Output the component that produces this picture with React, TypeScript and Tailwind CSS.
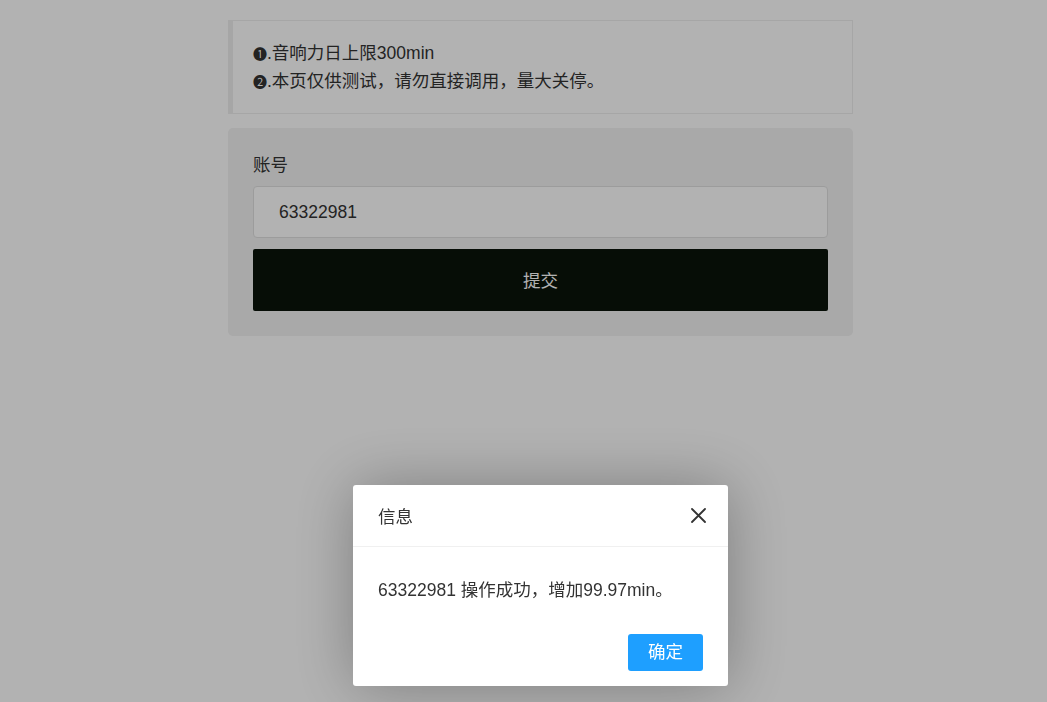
export default function App() {
  return (
    <div
      className="relative min-h-screen bg-white text-[17.5px] text-[#333]"
      style={{ fontFamily: '"Liberation Sans", "Noto Sans CJK SC", "DejaVu Sans", sans-serif' }}
    >
      <div className="ml-[228px] w-[625px] pt-[20px]">
        <blockquote className="border border-l-[5px] border-[#eee] py-[18px] pl-[20px] leading-[28px]">
          <div className="h-[28px]">
            <span className="text-[14px] leading-none">❶</span>.音响力日上限300min
          </div>
          <div className="h-[28px]">
            <span className="text-[14px] leading-none">❷</span>.本页仅供测试，请勿直接调用，量大关停。
          </div>
        </blockquote>

        <div className="mt-[14px] rounded-[5px] bg-[#f2f2f2] px-[25px] py-[25px]">
          <label className="block leading-[24px] text-[#333]">账号</label>
          <input
            className="mt-[9px] block h-[52px] w-full rounded-[4px] border border-[#e0e0e0] bg-white px-[25px] text-[17.5px] text-[#333] outline-none"
            defaultValue="63322981"
          />
          <button className="mt-[11px] block h-[62px] w-full rounded-[2px] bg-[#091409] pt-[2px] text-white">
            提交
          </button>
        </div>
      </div>

      {/* shade */}
      <div className="fixed inset-0 bg-black/30" />

      {/* layer dialog */}
      <div className="fixed left-[353px] top-[485px] w-[375px] rounded-[3px] bg-white shadow-[1px_1px_62px_rgba(0,0,0,0.3)]">
        <div className="flex h-[62px] items-center justify-between border-b border-[#f0f0f0] pl-[25px] pr-[22px]">
          <span className="pt-[3px] text-[#333]">信息</span>
          <svg width="15" height="15" viewBox="0 0 15 15" className="text-[#333]">
            <path d="M1 1L14 14M14 1L1 14" stroke="currentColor" strokeWidth="1.8" strokeLinecap="round" />
          </svg>
        </div>
        <div className="px-[25px] pt-[28px] pb-[24px] leading-[30px]">
          63322981 操作成功，增加99.97min。
        </div>
        <div className="flex justify-end pr-[25px] pb-[15px] pt-[5px]">
          <button className="h-[37px] w-[75px] rounded-[3px] bg-[#1e9fff] text-white">确定</button>
        </div>
      </div>
    </div>
  )
}
